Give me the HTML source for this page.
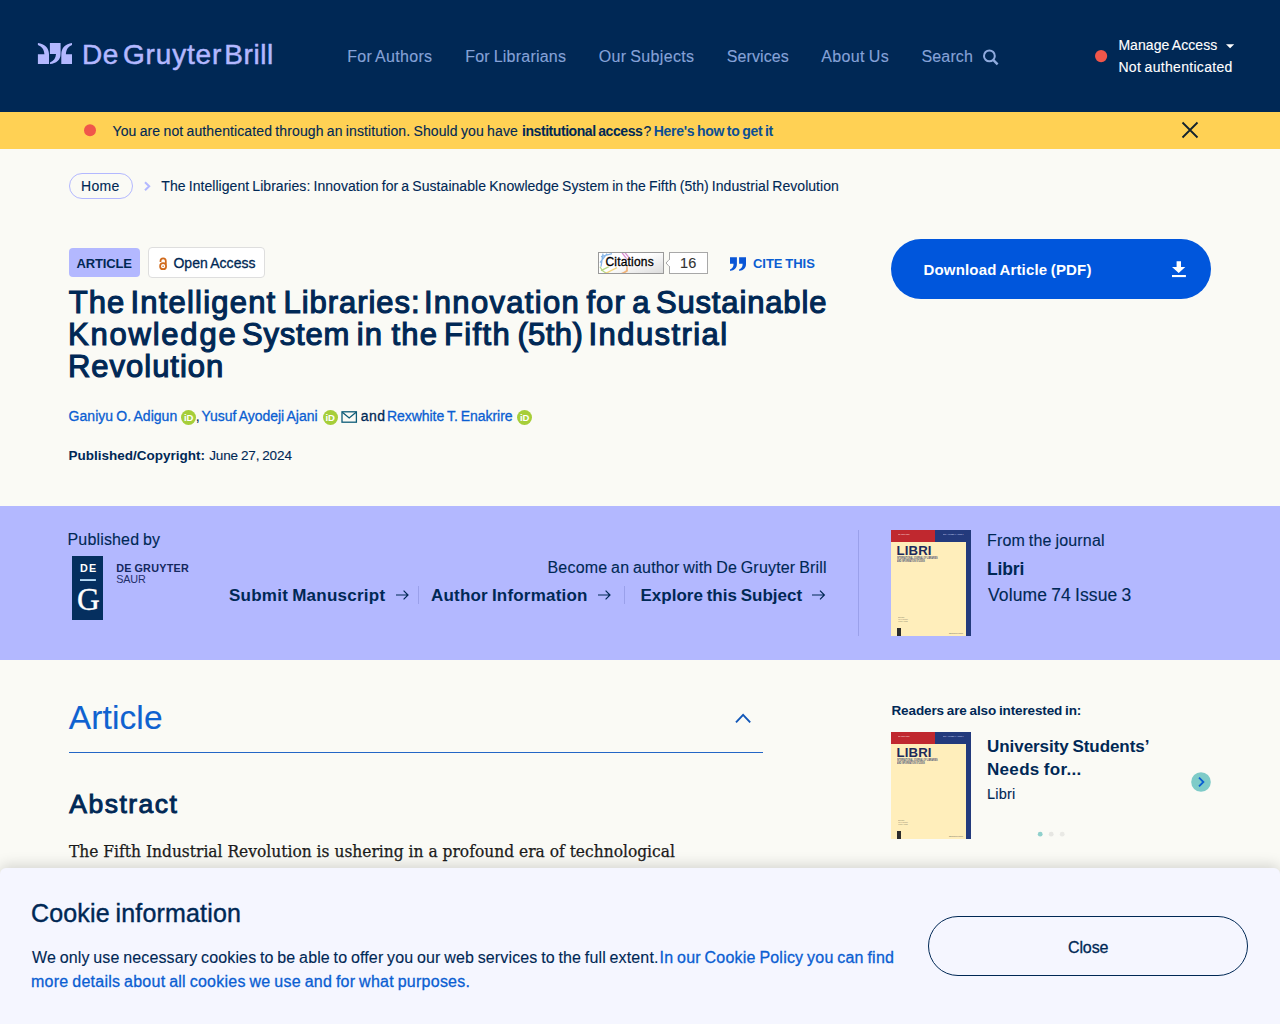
<!DOCTYPE html>
<html lang="en">
<head>
<meta charset="utf-8">
<title>The Intelligent Libraries: Innovation for a Sustainable Knowledge System in the Fifth (5th) Industrial Revolution</title>
<style>
*{box-sizing:border-box;margin:0;padding:0}
html,body{width:1280px;height:1024px;overflow:hidden}
body{background:#fafaf5;font-family:"Liberation Sans",sans-serif;color:#002855;position:relative}
.tx{position:absolute;white-space:nowrap;z-index:5}
.bx{position:absolute}
svg{position:absolute;left:0;top:0;overflow:visible}
#hdr{left:0;top:0;width:1280px;height:112px;background:#002855}
#ban{left:0;top:112px;width:1280px;height:36.5px;background:#ffd154}
#homebx{left:69px;top:173px;width:64px;height:26px;border:1px solid #b3b8ff;border-radius:13px}
#bartbx{left:69px;top:248px;width:71px;height:28.6px;background:#b3b8ff;border-radius:4px}
#boabx{left:148px;top:247.2px;width:116.8px;height:30.6px;background:#fff;border:1px solid #dedede;border-radius:4px}
#citbx{left:598px;top:252.3px;width:66px;height:21.4px;border:1px solid #9a9a9a;background:linear-gradient(160deg,#fff 45%,#dcdcdc 100%);overflow:hidden}
#cntbx{left:669px;top:252.3px;width:39px;height:21.4px;border:1px solid #a8a8a8;background:#fff}
#dlbx{left:890.7px;top:238.7px;width:320px;height:60px;border-radius:30px;background:#0056dc}
#band{left:0;top:506px;width:1280px;height:154px;background:#b3b8ff}
#dgbx{left:72px;top:556.2px;width:31.4px;height:63.5px;background:#052f5f}
.sep{width:1px;background:#9aa0ea}
#artline{left:69px;top:752px;width:694px;height:1px;background:#2366c6}
#ck{left:0;top:868px;width:1280px;height:156px;background:#f5f6ff;border-radius:6px 6px 0 0;box-shadow:0 -3px 14px rgba(0,0,0,.15);z-index:3}
#ckbtn{left:928px;top:916px;width:320px;height:60px;border:1.2px solid #002855;border-radius:30px;z-index:4}
.orc{position:absolute;width:15px;height:15px;border-radius:50%;background:#a6ce39;color:#fff;font:700 9.5px/15px "Liberation Sans",sans-serif;text-align:center;letter-spacing:-0.3px;z-index:5}
.cv{position:absolute;background:#ffeebb;overflow:hidden}
.cv .r{position:absolute;left:0;top:0;width:55%;height:11.6px;background:#c0282f}
.cv .b{position:absolute;left:55%;top:0;width:45%;height:11.6px;background:#233a7c}
.cv .s{position:absolute;right:0;top:0;width:5px;height:100%;background:#233a7c}
.cv div{white-space:nowrap;font-family:"Liberation Sans",sans-serif}
.cv .l{position:absolute;left:5.6px;top:13.8px;font:700 13.2px/14px "Liberation Sans",sans-serif;color:#1d2a5c;letter-spacing:0.1px}
.cv .u{position:absolute;left:6.2px;top:27.9px;font-weight:700;font-size:2.75px;line-height:2.75px;color:#4a5173;transform:scaleX(.72);transform-origin:0 0}
.cv .k{position:absolute;left:6.2px;bottom:0;width:4.2px;height:8px;background:#2c2c2c}
.cv .m{position:absolute;left:6.5px;bottom:13.6px;font-size:2.3px;line-height:1.9px;color:#8a846c;transform:scaleX(.62);transform-origin:0 0}
.cv .n{position:absolute;right:8.4px;bottom:1.4px;font-size:2.1px;line-height:2.4px;color:#555;transform:scaleX(.64);transform-origin:100% 0}
.cv .h1{position:absolute;left:6.8px;top:3px;font-size:2.3px;line-height:2.4px;font-weight:700;color:#f3c9c9;transform:scaleX(.76);transform-origin:0 0}
.cv .h2{position:absolute;left:51.8px;top:3.8px;font-size:2.5px;line-height:2.6px;font-weight:700;color:#b5bfe2;transform:scaleX(.6);transform-origin:0 0}
#lg0{left:81.91px;top:36.80px;font:400 28.00px/36px "Liberation Sans",sans-serif;color:#b3b8ff;letter-spacing:0.703px;word-spacing:-1.540px;-webkit-text-stroke:0.5px #b3b8ff;}
#lg1{left:123.00px;top:36.80px;font:400 28.00px/36px "Liberation Sans",sans-serif;color:#b3b8ff;letter-spacing:0.829px;word-spacing:-1.540px;-webkit-text-stroke:0.5px #b3b8ff;}
#lg2{left:224.25px;top:36.80px;font:400 28.00px/36px "Liberation Sans",sans-serif;color:#b3b8ff;letter-spacing:0.577px;word-spacing:-1.540px;-webkit-text-stroke:0.5px #b3b8ff;}
#n1{left:347.20px;top:46.20px;font:400 16.00px/21px "Liberation Sans",sans-serif;color:#86a2d8;letter-spacing:0.309px;word-spacing:-0.880px;-webkit-text-stroke:0.12px #86a2d8;}
#n2{left:465.20px;top:46.20px;font:400 16.00px/21px "Liberation Sans",sans-serif;color:#86a2d8;letter-spacing:0.229px;word-spacing:-0.880px;-webkit-text-stroke:0.12px #86a2d8;}
#n3{left:598.80px;top:46.20px;font:400 16.00px/21px "Liberation Sans",sans-serif;color:#86a2d8;letter-spacing:0.327px;word-spacing:-0.880px;-webkit-text-stroke:0.12px #86a2d8;}
#n4{left:726.80px;top:46.20px;font:400 16.00px/21px "Liberation Sans",sans-serif;color:#86a2d8;letter-spacing:0.093px;word-spacing:-0.880px;-webkit-text-stroke:0.12px #86a2d8;}
#n5{left:821.20px;top:46.20px;font:400 16.00px/21px "Liberation Sans",sans-serif;color:#86a2d8;letter-spacing:0.381px;word-spacing:-0.880px;-webkit-text-stroke:0.12px #86a2d8;}
#n6{left:921.50px;top:46.20px;font:400 16.00px/21px "Liberation Sans",sans-serif;color:#86a2d8;letter-spacing:0.141px;word-spacing:-0.880px;-webkit-text-stroke:0.12px #86a2d8;}
#a1{left:1118.40px;top:36.01px;font:400 14.00px/18px "Liberation Sans",sans-serif;color:#fff;letter-spacing:0.064px;word-spacing:-0.770px;-webkit-text-stroke:0.12px #fff;}
#a2{left:1118.40px;top:58.01px;font:400 14.00px/18px "Liberation Sans",sans-serif;color:#fff;letter-spacing:0.313px;word-spacing:-0.770px;-webkit-text-stroke:0.12px #fff;}
#bn1{left:112.50px;top:122.21px;font:400 14.00px/18px "Liberation Sans",sans-serif;color:#002855;letter-spacing:0.113px;word-spacing:-0.770px;-webkit-text-stroke:0.12px #002855;}
#bn2{left:522.00px;top:122.21px;font:700 14.00px/18px "Liberation Sans",sans-serif;color:#002855;letter-spacing:-0.441px;word-spacing:-0.770px;}
#bn3{left:643.60px;top:122.21px;font:400 14.00px/18px "Liberation Sans",sans-serif;color:#002855;letter-spacing:0.000px;word-spacing:-0.770px;-webkit-text-stroke:0.12px #002855;}
#bn4{left:653.80px;top:122.21px;font:700 14.00px/18px "Liberation Sans",sans-serif;color:#0c4f94;letter-spacing:-0.317px;word-spacing:-0.770px;}
#home{left:81.00px;top:177.01px;font:400 14.00px/18px "Liberation Sans",sans-serif;color:#002855;letter-spacing:0.280px;word-spacing:-0.770px;-webkit-text-stroke:0.12px #002855;}
#crumb{left:161.30px;top:177.01px;font:400 14.00px/18px "Liberation Sans",sans-serif;color:#002855;letter-spacing:0.045px;word-spacing:-0.770px;-webkit-text-stroke:0.12px #002855;}
#bart{left:76.50px;top:255.21px;font:700 13.00px/17px "Liberation Sans",sans-serif;color:#002855;letter-spacing:-0.160px;word-spacing:-0.715px;}
#boa{left:173.40px;top:254.21px;font:400 14.00px/18px "Liberation Sans",sans-serif;color:#002855;letter-spacing:0.041px;word-spacing:-0.770px;-webkit-text-stroke:0.3px #002855;}
#cit{left:605.40px;top:254.41px;font:400 12.00px/16px "Liberation Sans",sans-serif;color:#000;letter-spacing:0.202px;word-spacing:-0.660px;-webkit-text-stroke:0.3px #000;text-shadow:0 0 2px #fff,0 0 2px #fff,0 0 3px #fff;}
#cit16{left:680.00px;top:254.01px;font:400 14.50px/19px "Liberation Sans",sans-serif;color:#333;letter-spacing:0.136px;word-spacing:-0.797px;-webkit-text-stroke:0.12px #333;}
#cite{left:753.00px;top:254.60px;font:700 13.00px/17px "Liberation Sans",sans-serif;color:#0a5ed2;letter-spacing:-0.031px;word-spacing:-0.715px;}
#ha0{left:68.79px;top:282.81px;font:400 31.00px/40px "Liberation Sans",sans-serif;color:#002855;letter-spacing:1.075px;word-spacing:-1.705px;-webkit-text-stroke:1.15px #002855;}
#ha1{left:130.50px;top:282.81px;font:400 31.00px/40px "Liberation Sans",sans-serif;color:#002855;letter-spacing:1.201px;word-spacing:-1.705px;-webkit-text-stroke:1.15px #002855;}
#ha2{left:283.60px;top:282.81px;font:400 31.00px/40px "Liberation Sans",sans-serif;color:#002855;letter-spacing:0.935px;word-spacing:-1.705px;-webkit-text-stroke:1.15px #002855;}
#ha3{left:423.90px;top:282.81px;font:400 31.00px/40px "Liberation Sans",sans-serif;color:#002855;letter-spacing:1.309px;word-spacing:-1.705px;-webkit-text-stroke:1.15px #002855;}
#ha4{left:586.40px;top:282.81px;font:400 31.00px/40px "Liberation Sans",sans-serif;color:#002855;letter-spacing:1.075px;word-spacing:-1.705px;-webkit-text-stroke:1.15px #002855;}
#ha5{left:632.30px;top:282.81px;font:400 31.00px/40px "Liberation Sans",sans-serif;color:#002855;letter-spacing:1.075px;word-spacing:-1.705px;-webkit-text-stroke:1.15px #002855;}
#ha6{left:655.90px;top:282.81px;font:400 31.00px/40px "Liberation Sans",sans-serif;color:#002855;letter-spacing:0.853px;word-spacing:-1.705px;-webkit-text-stroke:1.15px #002855;}
#hb0{left:68.00px;top:314.81px;font:400 31.00px/40px "Liberation Sans",sans-serif;color:#002855;letter-spacing:1.781px;word-spacing:-1.705px;-webkit-text-stroke:1.15px #002855;}
#hb1{left:242.10px;top:314.81px;font:400 31.00px/40px "Liberation Sans",sans-serif;color:#002855;letter-spacing:0.774px;word-spacing:-1.705px;-webkit-text-stroke:1.15px #002855;}
#hb2{left:356.68px;top:314.81px;font:400 31.00px/40px "Liberation Sans",sans-serif;color:#002855;letter-spacing:1.150px;word-spacing:-1.705px;-webkit-text-stroke:1.15px #002855;}
#hb3{left:391.52px;top:314.81px;font:400 31.00px/40px "Liberation Sans",sans-serif;color:#002855;letter-spacing:1.150px;word-spacing:-1.705px;-webkit-text-stroke:1.15px #002855;}
#hb4{left:444.00px;top:314.81px;font:400 31.00px/40px "Liberation Sans",sans-serif;color:#002855;letter-spacing:1.388px;word-spacing:-1.705px;-webkit-text-stroke:1.15px #002855;}
#hb5{left:517.40px;top:314.81px;font:400 31.00px/40px "Liberation Sans",sans-serif;color:#002855;letter-spacing:0.396px;word-spacing:-1.705px;-webkit-text-stroke:1.15px #002855;}
#hb6{left:588.60px;top:314.81px;font:400 31.00px/40px "Liberation Sans",sans-serif;color:#002855;letter-spacing:1.411px;word-spacing:-1.705px;-webkit-text-stroke:1.15px #002855;}
#hc0{left:68.00px;top:346.60px;font:400 31.00px/40px "Liberation Sans",sans-serif;color:#002855;letter-spacing:0.974px;word-spacing:-1.705px;-webkit-text-stroke:1.15px #002855;}
#au1{left:68.60px;top:406.81px;font:400 14.00px/18px "Liberation Sans",sans-serif;color:#0a5ed2;letter-spacing:0.028px;word-spacing:-0.770px;-webkit-text-stroke:0.3px #0a5ed2;}
#auc{left:195.70px;top:406.81px;font:400 14.00px/18px "Liberation Sans",sans-serif;color:#002855;letter-spacing:0.000px;word-spacing:-0.770px;-webkit-text-stroke:0.12px #002855;}
#au2{left:201.40px;top:406.81px;font:400 14.00px/18px "Liberation Sans",sans-serif;color:#0a5ed2;letter-spacing:-0.020px;word-spacing:-0.770px;-webkit-text-stroke:0.3px #0a5ed2;}
#aua{left:360.80px;top:406.81px;font:400 14.00px/18px "Liberation Sans",sans-serif;color:#002855;letter-spacing:0.414px;word-spacing:-0.770px;-webkit-text-stroke:0.3px #002855;}
#au3{left:387.00px;top:406.81px;font:400 14.00px/18px "Liberation Sans",sans-serif;color:#0a5ed2;letter-spacing:-0.055px;word-spacing:-0.770px;-webkit-text-stroke:0.3px #0a5ed2;}
#pb1{left:68.60px;top:446.51px;font:700 13.50px/18px "Liberation Sans",sans-serif;color:#002855;letter-spacing:-0.005px;word-spacing:-0.743px;}
#pb2{left:209.20px;top:446.51px;font:400 13.50px/18px "Liberation Sans",sans-serif;color:#002855;letter-spacing:-0.115px;word-spacing:-0.743px;-webkit-text-stroke:0.12px #002855;}
#dl{left:923.50px;top:259.51px;font:700 15.00px/20px "Liberation Sans",sans-serif;color:#fff;letter-spacing:0.165px;word-spacing:-0.825px;}
#dgde{left:80.00px;top:560.81px;font:700 10.80px/14px "Liberation Sans",sans-serif;color:#fff;letter-spacing:1.103px;word-spacing:-0.594px;}
#dgg{left:77.00px;top:578.81px;font:400 31.50px/41px "Liberation Serif",serif;color:#fff;letter-spacing:0.000px;word-spacing:0.000px;-webkit-text-stroke:0.35px #fff;}
#pby{left:67.50px;top:528.50px;font:400 16.00px/21px "Liberation Sans",sans-serif;color:#002855;letter-spacing:0.160px;word-spacing:-0.880px;-webkit-text-stroke:0.12px #002855;}
#dg1{left:116.30px;top:560.70px;font:700 10.80px/14px "Liberation Sans",sans-serif;color:#14285e;letter-spacing:0.256px;word-spacing:-0.594px;}
#dg2{left:116.30px;top:571.70px;font:400 10.80px/14px "Liberation Sans",sans-serif;color:#1f2f6a;letter-spacing:-0.167px;word-spacing:-0.594px;-webkit-text-stroke:0;}
#sm{left:229.00px;top:585.00px;font:700 17.00px/22px "Liberation Sans",sans-serif;color:#002855;letter-spacing:0.255px;word-spacing:-0.935px;}
#ai{left:431.00px;top:585.00px;font:700 17.00px/22px "Liberation Sans",sans-serif;color:#002855;letter-spacing:0.200px;word-spacing:-0.935px;}
#es{left:640.50px;top:585.00px;font:700 17.00px/22px "Liberation Sans",sans-serif;color:#002855;letter-spacing:0.006px;word-spacing:-0.935px;}
#bec{left:547.50px;top:557.00px;font:400 16.00px/21px "Liberation Sans",sans-serif;color:#002855;letter-spacing:0.186px;word-spacing:-0.880px;-webkit-text-stroke:0.12px #002855;}
#fj{left:987.00px;top:530.00px;font:400 16.00px/21px "Liberation Sans",sans-serif;color:#002855;letter-spacing:0.188px;word-spacing:-0.880px;-webkit-text-stroke:0.12px #002855;}
#lib{left:987.00px;top:557.50px;font:700 17.50px/23px "Liberation Sans",sans-serif;color:#002855;letter-spacing:-0.138px;word-spacing:-0.963px;}
#vol{left:988.00px;top:584.00px;font:400 17.50px/23px "Liberation Sans",sans-serif;color:#002855;letter-spacing:0.134px;word-spacing:-0.963px;-webkit-text-stroke:0.12px #002855;}
#arth{left:68.80px;top:695.80px;font:400 33.50px/44px "Liberation Sans",sans-serif;color:#0f62d0;letter-spacing:0.110px;word-spacing:-1.843px;-webkit-text-stroke:0.12px #0f62d0;}
#absh{left:69.30px;top:786.81px;font:400 26.50px/34px "Liberation Sans",sans-serif;color:#002855;letter-spacing:1.480px;word-spacing:-1.458px;-webkit-text-stroke:0.95px #002855;}
#body{left:69.00px;top:840.01px;font:400 17.20px/22px "DejaVu Serif","Liberation Serif",serif;color:#1a1a1a;letter-spacing:0.008px;word-spacing:0.000px;font-stretch:condensed;-webkit-text-stroke:0.25px #1a1a1a;}
#rd{left:891.50px;top:701.81px;font:700 13.50px/18px "Liberation Sans",sans-serif;color:#002855;letter-spacing:-0.127px;word-spacing:-0.743px;}
#us1{left:987.00px;top:735.50px;font:700 17.00px/22px "Liberation Sans",sans-serif;color:#002855;letter-spacing:-0.053px;word-spacing:-0.935px;}
#us2{left:987.00px;top:759.21px;font:700 17.00px/22px "Liberation Sans",sans-serif;color:#002855;letter-spacing:0.320px;word-spacing:-0.935px;}
#us3{left:987.00px;top:784.81px;font:400 14.50px/19px "Liberation Sans",sans-serif;color:#002855;letter-spacing:0.205px;word-spacing:-0.797px;-webkit-text-stroke:0.12px #002855;}
#ckh{left:31.00px;top:896.51px;font:400 25.00px/32px "Liberation Sans",sans-serif;color:#002855;letter-spacing:0.167px;word-spacing:-1.375px;-webkit-text-stroke:0.4px #002855;}
#ck1{left:32.00px;top:946.50px;font:400 16.00px/21px "Liberation Sans",sans-serif;color:#002855;letter-spacing:0.138px;word-spacing:-0.880px;-webkit-text-stroke:0.12px #002855;}
#ck2{left:659.50px;top:946.50px;font:400 16.00px/21px "Liberation Sans",sans-serif;color:#0a5ed2;letter-spacing:0.208px;word-spacing:-0.880px;-webkit-text-stroke:0.3px #0a5ed2;}
#ck3{left:31.00px;top:970.50px;font:400 16.00px/21px "Liberation Sans",sans-serif;color:#0a5ed2;letter-spacing:0.248px;word-spacing:-0.880px;-webkit-text-stroke:0.3px #0a5ed2;}
#ckb{left:1068.00px;top:936.50px;font:400 16.00px/21px "Liberation Sans",sans-serif;color:#002855;letter-spacing:-0.127px;word-spacing:-0.880px;-webkit-text-stroke:0.3px #002855;}
</style>
</head>
<body>
<div class="bx" id="hdr"></div>
<div class="bx" id="ban"></div>
<div class="bx" id="homebx"></div>
<div class="bx" id="bartbx"></div>
<div class="bx" id="boabx"></div>
<div class="bx" id="citbx">
<svg width="66" height="22" viewBox="598 252.3 66 22"><g fill="none" stroke-width="1.3" opacity=".65">
<path d="M599,262 L606,253 M600,256 L611,253 M602,253 L600,266" stroke="#4a90d9"/>
<path d="M621,252 L627,260 M624,252 L629,258" stroke="#c44fb4"/>
<path d="M599,266 Q602,273 610,273 M600,270 L608,266" stroke="#8fc441"/>
<path d="M608,274 Q618,276 626,270 L626,265" stroke="#f0923a" stroke-width="1.8"/>
<path d="M604,273 L616,267" stroke="#f2c53d"/>
</g></svg>
</div>
<div class="bx" id="cntbx"></div>
<div class="bx" id="dlbx"></div>
<div class="bx" id="band"></div>
<div class="bx" id="dgbx"></div>
<div class="bx sep" style="left:418px;top:586px;height:18px"></div>
<div class="bx sep" style="left:624px;top:586px;height:18px"></div>
<div class="bx sep" style="left:858px;top:530px;height:106px"></div>
<div class="bx" id="artline"></div>

<div class="cv" style="left:891px;top:530px;width:80px;height:106px"><div class="r"></div><div class="b"></div><div class="s"></div><div class="h1">DE GRUYTER</div><div class="h2">2024 · VOLUME 74 · ISSUE 3</div><div class="l">LIBRI</div><div class="u">INTERNATIONAL JOURNAL OF LIBRARIES<br>AND INFORMATION STUDIES</div><div class="m">EDITORS<br>Ian M. Johnson<br>Kendra Albright</div><div class="k"></div><div class="n">www.degruyter.com/libri</div></div>
<div class="cv" style="left:891px;top:732px;width:80px;height:107px"><div class="r"></div><div class="b"></div><div class="s"></div><div class="h1">DE GRUYTER</div><div class="h2">2024 · VOLUME 74 · ISSUE 3</div><div class="l">LIBRI</div><div class="u">INTERNATIONAL JOURNAL OF LIBRARIES<br>AND INFORMATION STUDIES</div><div class="m">EDITORS<br>Ian M. Johnson<br>Kendra Albright</div><div class="k"></div><div class="n">www.degruyter.com/libri</div></div>

<svg width="1280" height="1024" viewBox="0 0 1280 1024" style="z-index:2">
<!-- logo mark -->
<g fill="#b3b8ff">
<path d="M37.9,43 C44.5,43.6 49,48 49,54.2 V64 H37.9 V54.2 H44.4 C44.2,50 42,46.6 37.9,45 Z"/>
<path d="M49.9,43 H60.6 V54 C60.6,60 56.2,63.6 50,64 V62.4 C53.8,61 55.8,58 56,54 H49.9 Z"/>
<path d="M72,43 C65.6,43.6 61.3,48 61.3,54.2 V64 H72 V54.2 H65.9 C66.1,50 68,46.6 72,45 Z"/>
</g>
<!-- search icon -->
<g fill="none" stroke="#8fabde" stroke-width="2"><circle cx="989.4" cy="55.9" r="5.4"/><path d="M993.2,59.8 L997.6,64.4" stroke-width="2.4"/></g>
<!-- access -->
<circle cx="1101.1" cy="56.1" r="6.1" fill="#f0564a"/>
<path d="M1226,44.2 H1234.2 L1230.1,48.3 Z" fill="#fff"/>
<!-- banner -->
<circle cx="90" cy="130.2" r="6" fill="#f0564a"/>
<path d="M1182.5,122.5 L1197.5,137.5 M1197.5,122.5 L1182.5,137.5" stroke="#13222e" stroke-width="1.8" fill="none"/>
<!-- crumb chevron -->
<path d="M145,182.2 L149.2,186.2 L145,190.2" stroke="#b3b8ff" stroke-width="2" fill="none"/>
<!-- open access lock -->
<g fill="none" stroke="#d06a1c" stroke-width="1.75"><circle cx="163.1" cy="266.2" r="3"/><path d="M160.5,262 V261 a2.65,2.65 0 0 1 5.3,0 V264.4"/></g>
<circle cx="163.1" cy="266.2" r="0.8" fill="#d06a1c"/>
<!-- notch -->
<path d="M669.4,259.4 L666,263 L669.4,266.6" fill="#fff" stroke="#a8a8a8" stroke-width="1"/>
<path d="M669.5,260 V266" stroke="#fff" stroke-width="1.4"/>
<!-- cite quote -->
<g fill="#0a56d6">
<path d="M730,257.2 H736.9 V264 C736.9,268 734.4,270.4 730.2,270.9 L730,269.6 C732.6,268.6 733.6,266.6 733.5,263.8 H730 Z"/>
<path d="M739.1,257.2 H746 V264 C746,268 743.5,270.4 739.3,270.9 L739.1,269.6 C741.7,268.6 742.7,266.6 742.6,263.8 H739.1 Z"/>
</g>
<!-- download icon -->
<g fill="#fff"><path d="M1176.6,261.2 H1181 V267.1 H1185.3 L1178.7,273 L1172,267.1 H1176.6 Z"/><rect x="1172" y="275" width="13.9" height="2.1"/></g>
<!-- envelope -->
<g fill="none" stroke="#0e5c78" stroke-width="1.3"><rect x="342" y="411.8" width="14.4" height="10.4"/><path d="M342.3,412.2 L349.2,418 L356.1,412.2"/></g>
<!-- arrows -->
<g fill="none" stroke="#002855" stroke-width="1.2">
<path d="M396,595 H408 M403.6,590.6 L408,595 L403.6,599.4"/>
<path d="M598,595 H610 M605.6,590.6 L610,595 L605.6,599.4"/>
<path d="M812,595 H824.4 M820,590.6 L824.4,595 L820,599.4"/>
</g>
<!-- DG logo -->
<rect x="80" y="579.1" width="15.9" height="1.9" fill="#b9dcf6"/>
<!-- article chevron -->
<path d="M736,722.4 L743.1,714.8 L750.2,722.4" stroke="#1257b8" stroke-width="1.9" fill="none"/>
<!-- sidebar arrow -->
<circle cx="1201" cy="782" r="9.8" fill="#7ecbc8"/>
<path d="M1199,777.6 L1203.4,782 L1199,786.4" stroke="#0a5ed2" stroke-width="1.8" fill="none"/>
<circle cx="1040.2" cy="834.2" r="2.4" fill="#8fd0cc"/><circle cx="1051.2" cy="834.2" r="2.4" fill="#e6e6e2"/><circle cx="1062.2" cy="834.2" r="2.4" fill="#e9e9e5"/>
</svg>

<div class="orc" style="left:181px;top:409.7px">iD</div>
<div class="orc" style="left:322.5px;top:409.7px">iD</div>
<div class="orc" style="left:517px;top:409.7px">iD</div>

<div class="bx" id="ck"></div>
<div class="bx" id="ckbtn"></div>
<div class="tx" id="lg0">De</div>
<div class="tx" id="lg1">Gruyter</div>
<div class="tx" id="lg2">Brill</div>
<div class="tx" id="n1">For Authors</div>
<div class="tx" id="n2">For Librarians</div>
<div class="tx" id="n3">Our Subjects</div>
<div class="tx" id="n4">Services</div>
<div class="tx" id="n5">About Us</div>
<div class="tx" id="n6">Search</div>
<div class="tx" id="a1">Manage Access</div>
<div class="tx" id="a2">Not authenticated</div>
<div class="tx" id="bn1">You are not authenticated through an institution. Should you have</div>
<div class="tx" id="bn2">institutional access</div>
<div class="tx" id="bn3">?</div>
<div class="tx" id="bn4">Here's how to get it</div>
<div class="tx" id="home">Home</div>
<div class="tx" id="crumb">The Intelligent Libraries: Innovation for a Sustainable Knowledge System in the Fifth (5th) Industrial Revolution</div>
<div class="tx" id="bart">ARTICLE</div>
<div class="tx" id="boa">Open Access</div>
<div class="tx" id="cit">Citations</div>
<div class="tx" id="cit16">16</div>
<div class="tx" id="cite">CITE THIS</div>
<div class="tx" id="ha0">The</div>
<div class="tx" id="ha1">Intelligent</div>
<div class="tx" id="ha2">Libraries:</div>
<div class="tx" id="ha3">Innovation</div>
<div class="tx" id="ha4">for</div>
<div class="tx" id="ha5">a</div>
<div class="tx" id="ha6">Sustainable</div>
<div class="tx" id="hb0">Knowledge</div>
<div class="tx" id="hb1">System</div>
<div class="tx" id="hb2">in</div>
<div class="tx" id="hb3">the</div>
<div class="tx" id="hb4">Fifth</div>
<div class="tx" id="hb5">(5th)</div>
<div class="tx" id="hb6">Industrial</div>
<div class="tx" id="hc0">Revolution</div>
<div class="tx" id="au1">Ganiyu O. Adigun</div>
<div class="tx" id="auc">,</div>
<div class="tx" id="au2">Yusuf Ayodeji Ajani</div>
<div class="tx" id="aua">and</div>
<div class="tx" id="au3">Rexwhite T. Enakrire</div>
<div class="tx" id="pb1">Published/Copyright:</div>
<div class="tx" id="pb2">June 27, 2024</div>
<div class="tx" id="dl">Download Article (PDF)</div>
<div class="tx" id="dgde">DE</div>
<div class="tx" id="dgg">G</div>
<div class="tx" id="pby">Published by</div>
<div class="tx" id="dg1">DE GRUYTER</div>
<div class="tx" id="dg2">SAUR</div>
<div class="tx" id="sm">Submit Manuscript</div>
<div class="tx" id="ai">Author Information</div>
<div class="tx" id="es">Explore this Subject</div>
<div class="tx" id="bec">Become an author with De Gruyter Brill</div>
<div class="tx" id="fj">From the journal</div>
<div class="tx" id="lib">Libri</div>
<div class="tx" id="vol">Volume 74 Issue 3</div>
<div class="tx" id="arth">Article</div>
<div class="tx" id="absh">Abstract</div>
<div class="tx" id="body">The Fifth Industrial Revolution is ushering in a profound era of technological</div>
<div class="tx" id="rd">Readers are also interested in:</div>
<div class="tx" id="us1">University Students’</div>
<div class="tx" id="us2">Needs for...</div>
<div class="tx" id="us3">Libri</div>
<div class="tx" id="ckh">Cookie information</div>
<div class="tx" id="ck1">We only use necessary cookies to be able to offer you our web services to the full extent.</div>
<div class="tx" id="ck2">In our Cookie Policy you can find</div>
<div class="tx" id="ck3">more details about all cookies we use and for what purposes.</div>
<div class="tx" id="ckb">Close</div>
</body>
</html>
